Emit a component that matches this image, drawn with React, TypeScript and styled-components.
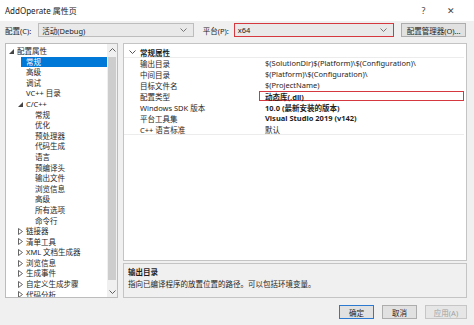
import React from "react";
import styled, { createGlobalStyle } from "styled-components";

const GlobalStyle = createGlobalStyle`
  html, body {
    margin: 0;
    padding: 0;
    background: #f0f0f0;
  }
`;

const FONT = `"Noto Sans", "Noto Sans CJK SC", sans-serif`;

const Window = styled.div`
  width: 474px;
  height: 325px;
  background: #f0f0f0;
  display: flex;
  flex-direction: column;
  font-family: ${FONT};
  font-size: 7.5px;
  color: #1e1e1e;
  overflow: hidden;
`;

const TitleBar = styled.div`
  height: 21px;
  background: #ffffff;
  display: flex;
  align-items: center;
  padding: 0 10px 0 5px;
`;

const Title = styled.div`
  flex: 1;
  font-size: 8px;
  color: #222;
`;

const TitleButton = styled.div`
  width: 27px;
  text-align: center;
  font-size: 9px;
  color: #444;
`;

const ConfigRow = styled.div`
  margin-top: 2px;
  height: 14px;
  display: flex;
  align-items: center;
  padding: 0 8px 0 5px;
`;

const FieldLabel = styled.span<{ $gap: number }>`
  margin-right: ${(p) => p.$gap}px;
  white-space: nowrap;
`;

const Select = styled.div<{ $width: number; $alert?: boolean; $after: number }>`
  width: ${(p) => p.$width}px;
  height: 14px;
  box-sizing: border-box;
  border: 1px solid ${(p) => (p.$alert ? "#d5393f" : "#bdbdbd")};
  background: #e9e9e9;
  display: flex;
  align-items: center;
  padding: 0 6px 0 3px;
  margin-right: ${(p) => p.$after}px;
`;

const SelectText = styled.span`
  flex: 1;
`;

const Button = styled.div<{ $width: number; $primary?: boolean; $disabled?: boolean }>`
  width: ${(p) => p.$width}px;
  height: 14px;
  box-sizing: border-box;
  border: 1px solid ${(p) => (p.$primary ? "#2b79d0" : p.$disabled ? "#c6c6c6" : "#adadad")};
  background: ${(p) => (p.$disabled ? "#e6e6e6" : "#e1e1e1")};
  color: ${(p) => (p.$disabled ? "#a2a2a2" : "#1e1e1e")};
  display: flex;
  align-items: center;
  justify-content: center;
  white-space: nowrap;
`;

const Main = styled.div`
  margin-top: 6px;
  height: 255px;
  display: flex;
  gap: 5px;
  padding: 0 7px 0 5px;
`;

const TreePanel = styled.div`
  width: 113px;
  box-sizing: border-box;
  border: 1px solid #bcbcbc;
  background: #ffffff;
  display: flex;
  overflow: hidden;
`;

const TreeList = styled.div`
  flex: 1;
  padding-top: 2px;
  overflow: hidden;
`;

const TreeRow = styled.div<{ $level: number }>`
  height: 10.6px;
  line-height: 10.6px;
  display: flex;
  align-items: center;
  padding-left: ${(p) => p.$level * 9 + 3}px;
  white-space: nowrap;
`;

const Toggle = styled.span`
  width: 8px;
  display: flex;
  align-items: center;
`;

const TreeLabel = styled.span<{ $selected?: boolean }>`
  flex: 1;
  margin-left: -5px;
  padding-left: 5px;
  background: ${(p) => (p.$selected ? "#0078d7" : "transparent")};
  color: ${(p) => (p.$selected ? "#ffffff" : "#1e1e1e")};
`;

const ScrollBar = styled.div`
  width: 10px;
  background: #f0f0f0;
  display: flex;
  flex-direction: column;
  align-items: center;
`;

const ScrollArrow = styled.div`
  height: 11px;
  display: flex;
  align-items: center;
  justify-content: center;
`;

const ScrollThumb = styled.div`
  width: 8px;
  flex: 1;
  background: #cdcdcd;
  margin: 2px 0 6px;
`;

const RightColumn = styled.div`
  flex: 1;
  display: flex;
  flex-direction: column;
  gap: 2px;
`;

const Grid = styled.div`
  flex: 1;
  box-sizing: border-box;
  border: 1px solid #c4c4c4;
  background: #ffffff;
  padding: 3px 2px 0 0;
`;

const GridHeader = styled.div`
  height: 11px;
  display: flex;
  align-items: center;
  font-weight: 700;
  border-bottom: 1px solid #ececec;
  box-sizing: border-box;
`;

const HeaderChevron = styled.span`
  width: 16px;
  padding-left: 5px;
  box-sizing: border-box;
  display: flex;
  align-items: center;
`;

const PropRow = styled.div<{ $last?: boolean }>`
  height: 11px;
  display: flex;
  align-items: stretch;
  box-sizing: border-box;
  border-bottom: 1px solid ${(p) => (p.$last ? "#ececec" : "transparent")};
`;

const PropName = styled.div`
  width: 135px;
  padding-left: 16px;
  box-sizing: border-box;
  display: flex;
  align-items: center;
  white-space: nowrap;
`;

const PropValue = styled.div<{ $bold?: boolean; $alert?: boolean }>`
  flex: 1;
  box-sizing: border-box;
  padding-left: 5px;
  display: flex;
  align-items: center;
  white-space: nowrap;
  font-weight: ${(p) => (p.$bold ? 700 : 400)};
  border: 1px solid ${(p) => (p.$alert ? "#d5393f" : "transparent")};
`;

const Description = styled.div`
  height: 35px;
  box-sizing: border-box;
  border: 1px solid #c4c4c4;
  background: #f0f0f0;
  padding: 2px 4px;
  line-height: 12px;
`;

const DescTitle = styled.div`
  font-weight: 700;
`;

const Footer = styled.div`
  margin-top: 7px;
  display: flex;
  justify-content: flex-end;
  gap: 8px;
  padding-right: 7px;
`;

const Triangle = ({ open }: { open: boolean }) =>
  open ? (
    <svg width="5" height="5" viewBox="0 0 5 5">
      <polygon points="5,0 5,5 0,5" fill="#444" />
    </svg>
  ) : (
    <svg width="5" height="7" viewBox="0 0 5 7">
      <polygon points="0.5,0.5 4.5,3.5 0.5,6.5" fill="none" stroke="#555" strokeWidth="0.9" />
    </svg>
  );

const Chevron = ({ up, color = "#777" }: { up?: boolean; color?: string }) => (
  <svg width="7" height="4" viewBox="0 0 7 4">
    <polyline
      points={up ? "0.5,3.5 3.5,0.5 6.5,3.5" : "0.5,0.5 3.5,3.5 6.5,0.5"}
      fill="none"
      stroke={color}
      strokeWidth="1"
    />
  </svg>
);

type TreeItem = { label: string; level: number; toggle?: "open" | "closed"; selected?: boolean };

const treeItems: TreeItem[] = [
  { label: "配置属性", level: 0, toggle: "open" },
  { label: "常规", level: 1, selected: true },
  { label: "高级", level: 1 },
  { label: "调试", level: 1 },
  { label: "VC++ 目录", level: 1 },
  { label: "C/C++", level: 1, toggle: "open" },
  { label: "常规", level: 2 },
  { label: "优化", level: 2 },
  { label: "预处理器", level: 2 },
  { label: "代码生成", level: 2 },
  { label: "语言", level: 2 },
  { label: "预编译头", level: 2 },
  { label: "输出文件", level: 2 },
  { label: "浏览信息", level: 2 },
  { label: "高级", level: 2 },
  { label: "所有选项", level: 2 },
  { label: "命令行", level: 2 },
  { label: "链接器", level: 1, toggle: "closed" },
  { label: "清单工具", level: 1, toggle: "closed" },
  { label: "XML 文档生成器", level: 1, toggle: "closed" },
  { label: "浏览信息", level: 1, toggle: "closed" },
  { label: "生成事件", level: 1, toggle: "closed" },
  { label: "自定义生成步骤", level: 1, toggle: "closed" },
  { label: "代码分析", level: 1, toggle: "closed" },
];

const props = [
  { name: "输出目录", value: "$(SolutionDir)$(Platform)\\$(Configuration)\\" },
  { name: "中间目录", value: "$(Platform)\\$(Configuration)\\" },
  { name: "目标文件名", value: "$(ProjectName)" },
  { name: "配置类型", value: "动态库(.dll)", bold: true, alert: true },
  { name: "Windows SDK 版本", value: "10.0 (最新安装的版本)", bold: true },
  { name: "平台工具集", value: "Visual Studio 2019 (v142)", bold: true },
  { name: "C++ 语言标准", value: "默认" },
];

const App = () => {
  return (
    <>
      <GlobalStyle />
      <Window>
        <TitleBar>
          <Title>AddOperate 属性页</Title>
          <TitleButton>?</TitleButton>
          <TitleButton>✕</TitleButton>
        </TitleBar>

        <ConfigRow>
          <FieldLabel $gap={7}>配置(C):</FieldLabel>
          <Select $width={156} $after={9}>
            <SelectText>活动(Debug)</SelectText>
            <Chevron />
          </Select>
          <FieldLabel $gap={5}>平台(P):</FieldLabel>
          <Select $width={161} $alert $after={7}>
            <SelectText>x64</SelectText>
            <Chevron />
          </Select>
          <Button $width={65}>配置管理器(O)...</Button>
        </ConfigRow>

        <Main>
          <TreePanel>
            <TreeList>
              {treeItems.map((item, i) => (
                <TreeRow key={i} $level={item.level}>
                  <Toggle>{item.toggle && <Triangle open={item.toggle === "open"} />}</Toggle>
                  <TreeLabel $selected={item.selected}>{item.label}</TreeLabel>
                </TreeRow>
              ))}
            </TreeList>
            <ScrollBar>
              <ScrollArrow>
                <Chevron up color="#606060" />
              </ScrollArrow>
              <ScrollThumb />
              <ScrollArrow>
                <Chevron color="#606060" />
              </ScrollArrow>
            </ScrollBar>
          </TreePanel>

          <RightColumn>
            <Grid>
              <GridHeader>
                <HeaderChevron>
                  <Chevron color="#555" />
                </HeaderChevron>
                常规属性
              </GridHeader>
              {props.map((p, i) => (
                <PropRow key={p.name} $last={i === props.length - 1}>
                  <PropName>{p.name}</PropName>
                  <PropValue $bold={p.bold} $alert={p.alert}>
                    {p.value}
                  </PropValue>
                </PropRow>
              ))}
            </Grid>
            <Description>
              <DescTitle>输出目录</DescTitle>
              <div>指向已编译程序的放置位置的路径。可以包括环境变量。</div>
            </Description>
          </RightColumn>
        </Main>

        <Footer>
          <Button $width={35} $primary>
            确定
          </Button>
          <Button $width={35}>取消</Button>
          <Button $width={42} $disabled>
            应用(A)
          </Button>
        </Footer>
      </Window>
    </>
  );
};

export default App;
